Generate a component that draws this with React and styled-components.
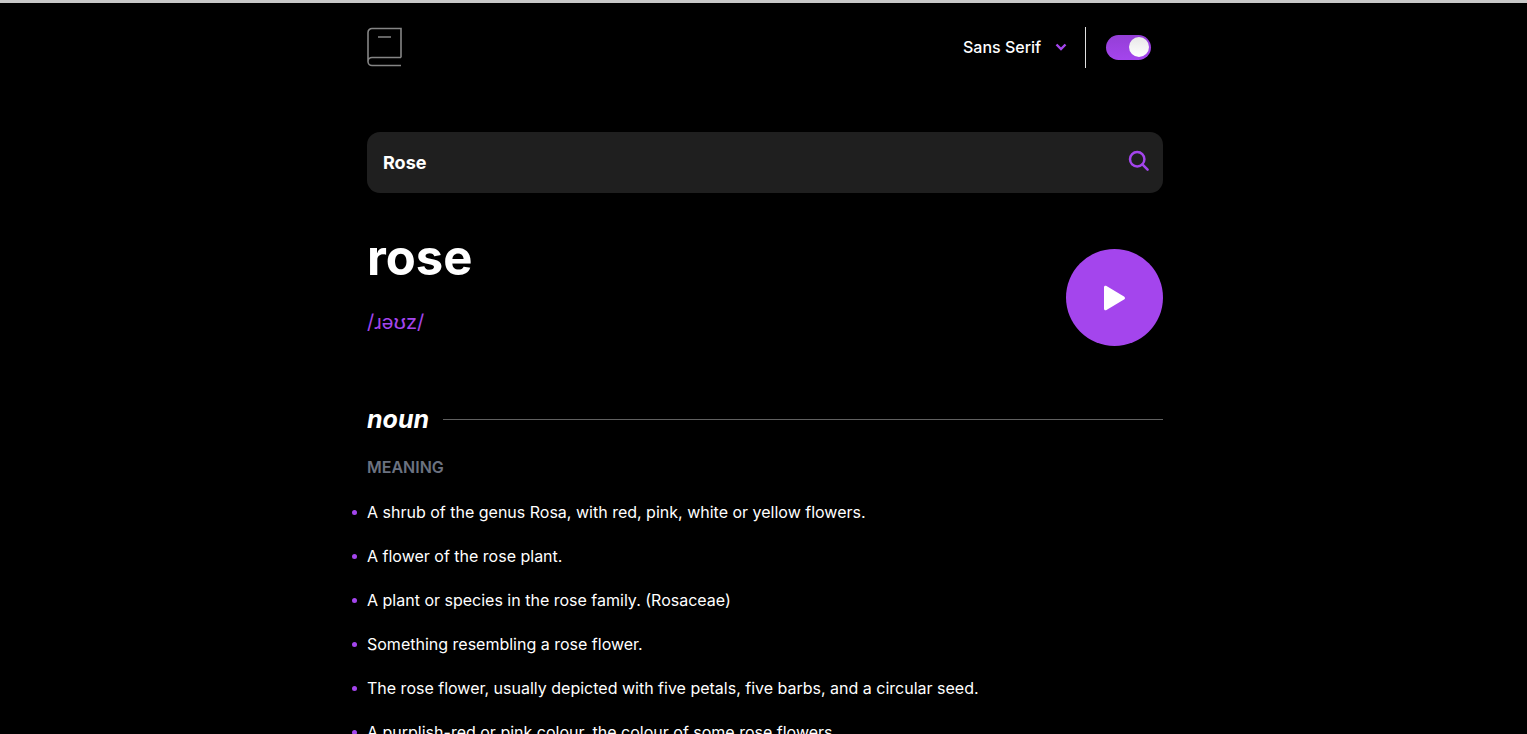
import React, { useState } from "react";
import styled, { createGlobalStyle } from "styled-components";

const purple = "#a445ed";

const GlobalStyle = createGlobalStyle`
  *, *::before, *::after { box-sizing: border-box; }
  html { scrollbar-width: none; background: #000; }
  body {
    margin: 0;
    background: #000;
    color: #fff;
    font-family: Inter, "Liberation Sans", sans-serif;
    font-size: 16px;
    line-height: 24px;
  }
`;

const Page = styled.div`
  min-height: 100vh;
  border-top: 3px solid #c8c8c8;
  padding: 24px 16px 0 19px;
`;

const Container = styled.div`
  max-width: 796px;
  margin: 0 auto;
`;

const Header = styled.header`
  display: flex;
  align-items: flex-start;
  justify-content: space-between;
  height: 41px;
`;

const LogoLink = styled.a`
  display: block;
  height: 40px;
  svg { display: block; }
`;

const Tools = styled.div`
  display: flex;
  align-items: center;
  height: 100%;
  padding-right: 12px;
`;

const FontPicker = styled.label`
  display: grid;
  grid-template-columns: 1fr 12px;
  align-items: center;
  column-gap: 13px;
  margin-right: 18px;
  padding-bottom: 2px;
  svg { display: block; }
`;

const FontSelect = styled.select`
  appearance: none;
  border: 0;
  padding: 0;
  background: transparent;
  color: #fff;
  font: 500 16px/24px Inter, "Liberation Sans", sans-serif;
  cursor: pointer;
  option { color: #000; }
`;

const Divider = styled.span`
  width: 1px;
  height: 100%;
  margin-right: 20px;
  background: #e0e0e0;
`;

const Toggle = styled.input`
  appearance: none;
  display: flex;
  align-items: center;
  width: 45px;
  height: 25px;
  margin: 0;
  padding: 0 2px 1px;
  border-radius: 13px;
  background: ${(p) => (p.checked ? "linear-gradient(#943fd6, #a445ed)" : "#757575")};
  justify-content: ${(p) => (p.checked ? "flex-end" : "flex-start")};
  cursor: pointer;
  &::before {
    content: "";
    width: 20px;
    height: 20px;
    border-radius: 50%;
    background: linear-gradient(#e8e8e8, #fff);
  }
`;

const SearchBar = styled.form`
  display: flex;
  align-items: center;
  height: 61px;
  margin-top: 64px;
  padding: 0 13px 0 16px;
  border-radius: 13px;
  background: #1f1f1f;
`;

const SearchInput = styled.input`
  flex: 1;
  min-width: 0;
  padding: 0;
  border: 0;
  outline: 0;
  background: transparent;
  color: #fff;
  font: 700 18px/24px Inter, "Liberation Sans", sans-serif;
`;

const SearchButton = styled.button`
  padding: 0 0 4px;
  border: 0;
  background: none;
  cursor: pointer;
  svg { display: block; }
`;

const WordRow = styled.section`
  display: flex;
  align-items: flex-start;
  justify-content: space-between;
  margin-top: 35px;
`;

const Word = styled.h1`
  margin: 0;
  font-size: 49px;
  font-weight: 700;
  line-height: 60px;
`;

const Phonetic = styled.p`
  margin: 20px 0 0;
  color: ${purple};
  font-size: 20px;
  line-height: 28px;
`;

const PlayButton = styled.button`
  display: grid;
  place-items: center;
  width: 97px;
  height: 97px;
  margin-top: 21px;
  padding: 0;
  border: 0;
  border-radius: 50%;
  background: ${purple};
  cursor: pointer;
`;

const PartOfSpeech = styled.h2`
  display: flex;
  align-items: center;
  gap: 14px;
  margin: 57px 0 0;
  font-size: 25px;
  font-style: italic;
  font-weight: 700;
  line-height: 32px;
  &::after {
    content: "";
    flex: 1;
    height: 1px;
    background: #606060;
  }
`;

const MeaningLabel = styled.h3`
  margin: 20px 0 0;
  color: #6b7280;
  font-size: 16px;
  font-weight: 600;
  line-height: 24px;
`;

const Definitions = styled.ul`
  display: grid;
  gap: 20px;
  margin: 21px 0 0 -16px;
  padding: 0;
  list-style: none;
`;

const Definition = styled.li`
  display: flex;
  gap: 10px;
  &::before {
    content: "";
    flex: none;
    width: 5px;
    height: 5px;
    margin: 10px 0 0 1px;
    border-radius: 50%;
    background: ${purple};
  }
`;

const meanings = [
  "A shrub of the genus Rosa, with red, pink, white or yellow flowers.",
  "A flower of the rose plant.",
  "A plant or species in the rose family. (Rosaceae)",
  "Something resembling a rose flower.",
  "The rose flower, usually depicted with five petals, five barbs, and a circular seed.",
  "A purplish-red or pink colour, the colour of some rose flowers.",
];

const BookIcon = () => (
  <svg width="35" height="40" viewBox="0 0 35 40" fill="none" stroke="#858585" strokeWidth="1.6" aria-hidden="true">
    <path d="M34 30.5V1.5H5A4 4 0 0 0 1 5.5V34.5A4 4 0 0 0 5 38.5H34M34 30.5H5A4 4 0 0 0 1 34.5M11 10H24" />
  </svg>
);

const ChevronIcon = () => (
  <svg width="12" height="8" viewBox="0 0 12 8" fill="none" stroke={purple} strokeWidth="2.4" aria-hidden="true">
    <path d="M1.5 1.5L6 6L10.5 1.5" />
  </svg>
);

const SearchIcon = () => (
  <svg width="22" height="22" viewBox="0 0 22 22" fill="none" stroke={purple} strokeWidth="2.5" aria-hidden="true">
    <circle cx="9.2" cy="9.2" r="7.2" />
    <path d="M14.4 14.4L19.6 19.6" strokeLinecap="round" />
  </svg>
);

const PlayIcon = () => (
  <svg width="23" height="26" viewBox="0 0 23 26" fill="#fff" aria-hidden="true">
    <path d="M1 2.2C1 .8 2.3.3 3.5 1L21 11.4C22.3 12.2 22.3 13.8 21 14.6L3.5 25C2.3 25.7 1 25.2 1 23.8Z" />
  </svg>
);

export default function App() {
  const [dark, setDark] = useState(true);
  const [query, setQuery] = useState("Rose");

  return (
    <Page>
      <GlobalStyle />
      <Container>
        <Header>
          <LogoLink href="#" aria-label="Dictionary home">
            <BookIcon />
          </LogoLink>
          <Tools>
            <FontPicker>
              <FontSelect aria-label="Font" defaultValue="sans">
                <option value="sans">Sans Serif</option>
              </FontSelect>
              <ChevronIcon />
            </FontPicker>
            <Divider />
            <Toggle
              type="checkbox"
              role="switch"
              aria-label="Dark mode"
              checked={dark}
              onChange={(e) => setDark(e.target.checked)}
            />
          </Tools>
        </Header>
        <SearchBar role="search" onSubmit={(e) => e.preventDefault()}>
          <SearchInput aria-label="Word" value={query} onChange={(e) => setQuery(e.target.value)} />
          <SearchButton type="submit" aria-label="Search">
            <SearchIcon />
          </SearchButton>
        </SearchBar>
        <main>
          <WordRow>
            <div>
              <Word>rose</Word>
              <Phonetic>/ɹəʊz/</Phonetic>
            </div>
            <PlayButton type="button" aria-label="Play pronunciation">
              <PlayIcon />
            </PlayButton>
          </WordRow>
          <PartOfSpeech>noun</PartOfSpeech>
          <MeaningLabel>MEANING</MeaningLabel>
          <Definitions>
            {meanings.map((text) => (
              <Definition key={text}>{text}</Definition>
            ))}
          </Definitions>
        </main>
      </Container>
    </Page>
  );
}
